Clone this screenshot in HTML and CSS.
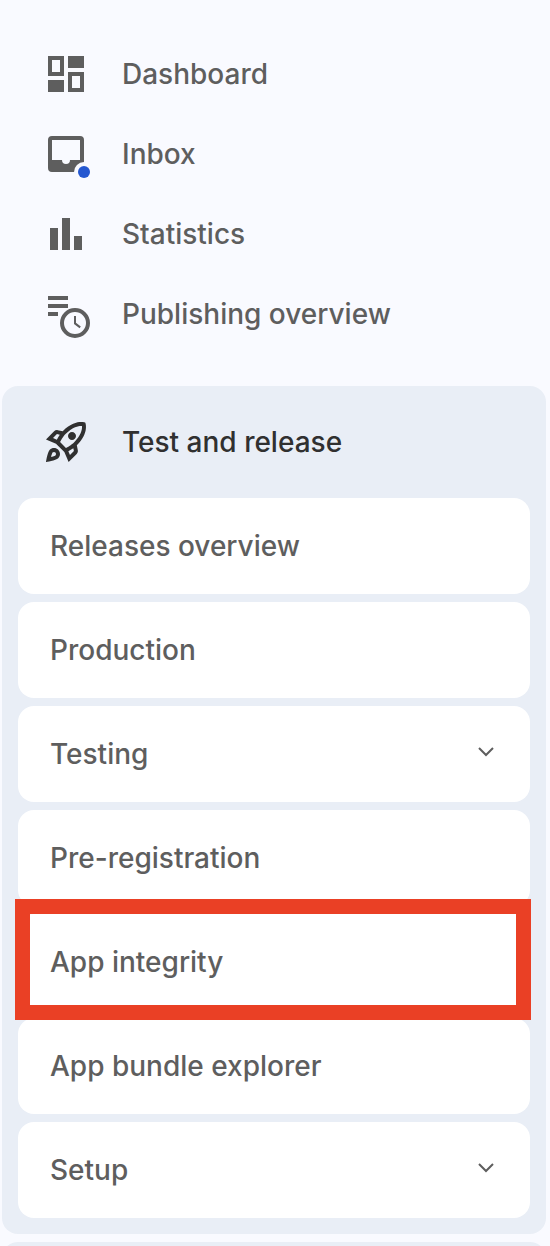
FILE: index.html
```html
<!DOCTYPE html>
<html lang="en">
<head>
<meta charset="utf-8">
<title>Test and release</title>
<link rel="stylesheet" href="styles.css">
</head>
<body>
<nav class="sidebar" aria-label="Main">
  <div class="primary">
    <a class="item" href="#">
      <svg class="icon" viewBox="0 0 24 24" aria-hidden="true"><path fill-rule="evenodd" d="M3 3h8v10H3zM5 5v6h4V5zM13 3h8v6h-8zM13 11h8v10h-8zM15 13v6h4v-6zM3 15h8v6H3z"/></svg>
      <span>Dashboard</span>
    </a>
    <a class="item" href="#">
      <svg class="icon" viewBox="0 0 24 24" aria-hidden="true"><path fill-rule="evenodd" d="M5 3h14a2 2 0 0 1 2 2v14a2 2 0 0 1-2 2H5a2 2 0 0 1-2-2V5a2 2 0 0 1 2-2zM5 5v10h5a2 2 0 0 0 4 0h5V5z"/><circle class="dot-ring" cx="21" cy="21" r="5"/><circle class="dot" cx="21" cy="21" r="3"/></svg>
      <span>Inbox</span>
    </a>
    <a class="item" href="#">
      <svg class="icon" viewBox="0 0 24 24" aria-hidden="true"><path d="M4 9h4v11H4zM10 4h4v16h-4zM16 13h4v7h-4z"/></svg>
      <span>Statistics</span>
    </a>
    <a class="item" href="#">
      <svg class="icon" viewBox="0 0 24 24" aria-hidden="true"><path d="M3 3h10v2H3zM3 7h10v2H3zM3 11h5v2H3z"/><circle class="dot-ring" cx="16.5" cy="16.5" r="7.5"/><circle class="line" cx="16.5" cy="16.5" r="6.5" stroke-width="2"/><path class="line" d="M16.5 13v3.7l2.6 2" stroke-width="1"/></svg>
      <span>Publishing overview</span>
    </a>
  </div>
  <section class="group">
    <h2 class="item heading">
      <svg class="icon" viewBox="0 0 24 24" aria-hidden="true"><path d="M6 15c-.83 0-1.58.34-2.12.88C2.7 17.06 2 22 2 22s4.94-.7 6.12-1.88C8.66 19.58 9 18.83 9 18c0-1.66-1.34-3-3-3zm.71 3.71c-.28.28-2.17.76-2.17.76s.47-1.88.76-2.17c.17-.19.42-.3.7-.3.55 0 1 .45 1 1 0 .28-.11.53-.29.71zm10.71-5.06c6.36-6.36 4.24-11.31 4.24-11.31s-4.95-2.12-11.31 4.24l-2.49-.5c-.65-.13-1.33.08-1.81.55L2 10.69l5 2.14L11.17 17l2.14 5 4.05-4.05c.47-.47.68-1.15.55-1.81l-.49-2.49zM7.41 10.83l-1.91-.82 1.97-1.97 1.44.29c-.57.83-1.08 1.7-1.5 2.5zm6.58 7.67l-.82-1.91c.8-.42 1.67-.93 2.49-1.5l.29 1.44-1.96 1.97zM16 12.24c-1.32 1.32-3.38 2.4-4.04 2.73l-2.93-2.93c.32-.65 1.4-2.71 2.73-4.04 4.68-4.68 8.23-3.99 8.23-3.99s.69 3.55-3.99 8.23zM15 11c1.1 0 2-.9 2-2s-.9-2-2-2-2 .9-2 2 .9 2 2 2z"/></svg>
      <span>Test and release</span>
    </h2>
    <div class="cards">
      <a class="card" href="#">Releases overview</a>
      <a class="card" href="#">Production</a>
      <button class="card" type="button" aria-expanded="false">Testing
        <svg class="chevron" viewBox="0 0 24 24" aria-hidden="true"><path class="line" d="M5 6l7 7 7-7" stroke-width="2"/></svg>
      </button>
      <a class="card" href="#">Pre-registration</a>
      <a class="card highlighted" href="#">App integrity</a>
      <a class="card" href="#">App bundle explorer</a>
      <button class="card" type="button" aria-expanded="false">Setup
        <svg class="chevron" viewBox="0 0 24 24" aria-hidden="true"><path class="line" d="M5 6l7 7 7-7" stroke-width="2"/></svg>
      </button>
    </div>
  </section>
  <section class="group next-group"></section>
</nav>
</body>
</html>
```
FILE: styles.css
```css
* {
  box-sizing: border-box;
}

body {
  margin: 0;
  background: #f9faff;
  color: #5e5e5e;
  font: 500 28px/32px Inter, "Liberation Sans", sans-serif;
}

.sidebar {
  display: flex;
  flex-direction: column;
  gap: 8px;
  height: 100vh;
  padding: 34px 4px 0 2px;
  overflow: hidden;
}

.primary {
  padding-bottom: 24px;
}

.item {
  display: flex;
  align-items: center;
  gap: 32px;
  height: 80px;
  padding-left: 40px;
  color: inherit;
  text-decoration: none;
}

.icon {
  flex: none;
  width: 48px;
  height: 48px;
  fill: currentColor;
  overflow: visible;
}

.line {
  fill: none;
  stroke: currentColor;
}

.dot-ring {
  fill: #f9faff;
}

.dot {
  fill: #2457d0;
}

.group {
  flex: none;
  padding: 0 16px 16px;
  border-radius: 16px;
  background: #e9eef6;
}

.heading {
  height: 112px;
  margin: 0;
  padding-left: 24px;
  color: #303030;
  font: inherit;
}

.cards {
  display: flex;
  flex-direction: column;
  gap: 8px;
}

.card {
  position: relative;
  display: flex;
  align-items: center;
  justify-content: space-between;
  height: 96px;
  padding: 0 32px;
  border: 0;
  border-radius: 16px;
  background: #fff;
  color: #5e5e5e;
  font: inherit;
  text-align: left;
  text-decoration: none;
}

.chevron {
  width: 24px;
  height: 24px;
}

.highlighted {
  z-index: 1;
}

.highlighted::after {
  content: "";
  position: absolute;
  inset: -15px -1px -10px -3px;
  border: 15px solid #ea4025;
}

.next-group {
  height: 112px;
}
```
